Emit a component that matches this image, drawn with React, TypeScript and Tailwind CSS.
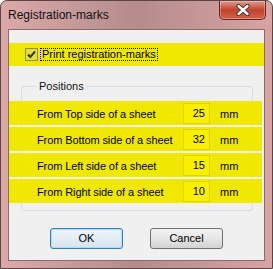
import React from "react";

type Row = {
  label: string;
  value: string;
};

const rows: Row[] = [
  { label: "From Top side of a sheet", value: "25" },
  { label: "From Bottom side of a sheet", value: "32" },
  { label: "From Left side of a sheet", value: "15" },
  { label: "From Right side of a sheet", value: "10" },
];

function CloseButton() {
  return (
    <div className="mr-[6px] flex h-[19px] w-[47px] items-center justify-center rounded-b-[5px] border border-t-0 border-[#5e2a22] bg-gradient-to-b from-[#e09a8c] via-[#c2402e] to-[#d0604a] shadow-[inset_0_0_0_1px_rgba(255,255,255,0.3)]">
      <svg width="14" height="12" viewBox="0 0 14 12">
        <path
          d="M2.5 2 L11.5 10 M11.5 2 L2.5 10"
          stroke="#3a2a2a"
          strokeWidth="4.2"
          strokeLinecap="round"
          fill="none"
        />
        <path
          d="M2.5 2 L11.5 10 M11.5 2 L2.5 10"
          stroke="#ffffff"
          strokeWidth="2.4"
          strokeLinecap="round"
          fill="none"
        />
      </svg>
    </div>
  );
}

function Checkbox() {
  return (
    <div className="flex h-[13px] w-[13px] items-center justify-center border border-[#8e8f50] bg-[#e6de40]">
      <svg width="11" height="11" viewBox="0 0 11 11">
        <path
          d="M2 5.5 L4.3 8 L9 2.5"
          stroke="#2c3a10"
          strokeWidth="2"
          fill="none"
        />
      </svg>
    </div>
  );
}

export default function App() {
  return (
    <div
      className="flex h-[269px] w-[273px] flex-col rounded-t-[7px] border border-[#5a4444] bg-gradient-to-r from-[#dca9a9] via-[#b48c8c] to-[#d8a3a3] text-[11px] text-black"
      style={{ fontFamily: '"Liberation Sans", Arial, sans-serif' }}
    >
      {/* title bar */}
      <div className="flex h-[28px] items-start justify-between">
        <span className="pl-[7px] pt-[7px] text-[12px] leading-[14px] text-[#111]">
          Registration-marks
        </span>
        <CloseButton />
      </div>

      {/* client area */}
      <div className="mx-[7px] mb-[7px] flex flex-1 flex-col border border-[#8a6a6a] bg-[#f0f0f0]">
        <div className="mt-[13px] flex h-[23px] items-center bg-[#f0e800] pl-[16px]">
          <Checkbox />
          <span className="ml-[2px] border border-dotted border-black px-[1px] leading-[11px]">
            Print registration-marks
          </span>
        </div>

        <fieldset className="ml-[12px] mr-[11px] mt-[14px] rounded-[3px] border border-[#d5dfe5] px-[12px] pb-[7px]">
          <legend className="ml-[3px] px-[2px] leading-[13px] text-[#111]">
            Positions
          </legend>
          <div className="-ml-[25px] -mr-[22px] mt-[8px] flex flex-col gap-[2px]">
            {rows.map((row) => (
              <div
                key={row.label}
                className="flex h-[24px] items-center bg-[#f0e800]"
              >
                <span className="w-[174px] pl-[28px] pt-[3px] tracking-[-0.1px]">
                  {row.label}
                </span>
                <div className="flex h-[21px] w-[27px] items-center justify-end border border-[#ddd500] bg-[#f8f000] pr-[4px]">
                  {row.value}
                </div>
                <span className="pl-[10px] pt-[3px]">mm</span>
              </div>
            ))}
          </div>
        </fieldset>

        <div className="mt-[17px] flex pl-[41px]">
          <button className="h-[21px] w-[73px] rounded-[3px] border border-[#3c7fb1] bg-gradient-to-b from-[#eef5fa] to-[#d6e4ee] shadow-[inset_0_0_0_1px_#a8dcf8]">
            OK
          </button>
          <button className="ml-[27px] h-[21px] w-[73px] rounded-[3px] border border-[#707070] bg-gradient-to-b from-[#f2f2f2] via-[#e6e6e6] to-[#d2d2d2]">
            Cancel
          </button>
        </div>
      </div>
    </div>
  );
}
